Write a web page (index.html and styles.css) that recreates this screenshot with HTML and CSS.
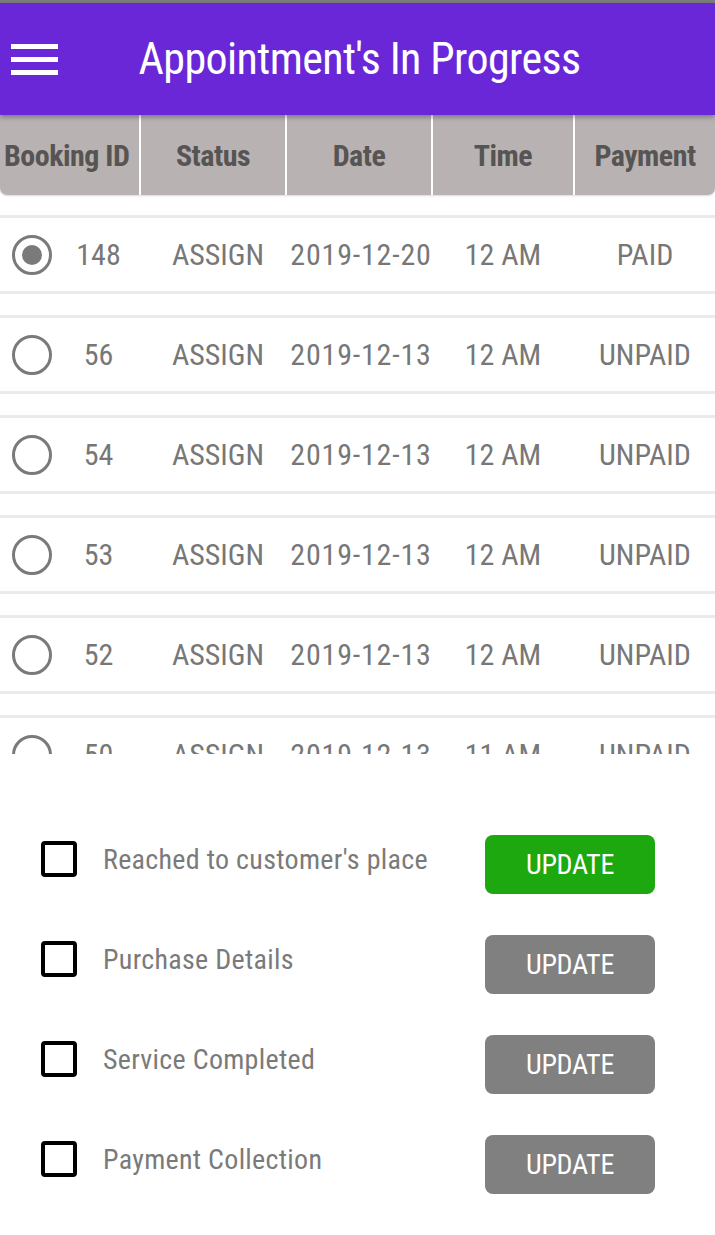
FILE: index.html
```html
<!DOCTYPE html>
<html>
<head>
<meta charset="utf-8">
<title>Appointment's In Progress</title>
<link rel="stylesheet" href="styles.css">
</head>
<body>
<div class="statusline"></div>
<header class="appbar">
  <button class="menu" aria-label="Menu">
    <span></span><span></span><span></span>
  </button>
  <h1 class="title">Appointment's In Progress</h1>
</header>

<div class="thead">
  <div class="th">Booking ID</div>
  <div class="th">Status</div>
  <div class="th">Date</div>
  <div class="th">Time</div>
  <div class="th">Payment</div>
</div>

<div class="list">
  <div class="row">
    <div class="cell first"><span class="radio checked"></span><span class="id">148</span></div>
    <div class="cell status">ASSIGN</div>
    <div class="cell date">2019-12-20</div>
    <div class="cell">12 AM</div>
    <div class="cell">PAID</div>
  </div>
  <div class="row">
    <div class="cell first"><span class="radio"></span><span class="id">56</span></div>
    <div class="cell status">ASSIGN</div>
    <div class="cell date">2019-12-13</div>
    <div class="cell">12 AM</div>
    <div class="cell">UNPAID</div>
  </div>
  <div class="row">
    <div class="cell first"><span class="radio"></span><span class="id">54</span></div>
    <div class="cell status">ASSIGN</div>
    <div class="cell date">2019-12-13</div>
    <div class="cell">12 AM</div>
    <div class="cell">UNPAID</div>
  </div>
  <div class="row">
    <div class="cell first"><span class="radio"></span><span class="id">53</span></div>
    <div class="cell status">ASSIGN</div>
    <div class="cell date">2019-12-13</div>
    <div class="cell">12 AM</div>
    <div class="cell">UNPAID</div>
  </div>
  <div class="row">
    <div class="cell first"><span class="radio"></span><span class="id">52</span></div>
    <div class="cell status">ASSIGN</div>
    <div class="cell date">2019-12-13</div>
    <div class="cell">12 AM</div>
    <div class="cell">UNPAID</div>
  </div>
  <div class="row">
    <div class="cell first"><span class="radio"></span><span class="id">50</span></div>
    <div class="cell status">ASSIGN</div>
    <div class="cell date">2019-12-13</div>
    <div class="cell">11 AM</div>
    <div class="cell">UNPAID</div>
  </div>
</div>

<section class="actions">
  <div class="action">
    <span class="check"></span>
    <span class="label">Reached to customer's place</span>
    <button class="update active">UPDATE</button>
  </div>
  <div class="action">
    <span class="check"></span>
    <span class="label">Purchase Details</span>
    <button class="update">UPDATE</button>
  </div>
  <div class="action">
    <span class="check"></span>
    <span class="label">Service Completed</span>
    <button class="update">UPDATE</button>
  </div>
  <div class="action">
    <span class="check"></span>
    <span class="label">Payment Collection</span>
    <button class="update">UPDATE</button>
  </div>
</section>
</body>
</html>
```
FILE: styles.css
```css
* { box-sizing: border-box; }
html, body { margin: 0; padding: 0; background: #ffffff; }
body {
  width: 715px;
  height: 1235px;
  overflow: hidden;
  font-family: "Roboto Condensed", Roboto, "Liberation Sans", sans-serif;
  font-stretch: condensed;
}

.statusline { height: 3px; background: #7e7e7e; }

.appbar {
  height: 112px;
  background: #6a27d8;
  display: flex;
  align-items: center;
  position: relative;
  z-index: 2;
  box-shadow: 0 2px 5px rgba(0,0,0,0.35);
}
.menu {
  margin: 0 0 0 11px;
  padding: 0;
  border: 0;
  background: transparent;
  width: 47px;
  display: flex;
  flex-direction: column;
  gap: 8px;
}
.menu span { display: block; height: 5px; background: #ffffff; }
.title {
  flex: 1;
  margin: 0 54px 0 0;
  text-align: center;
  color: #ffffff;
  font-weight: 400;
  font-size: 44px;
  letter-spacing: -0.6px;
  line-height: 1;
}

.thead {
  display: grid;
  grid-template-columns: 139px 144px 144px 140px 140px;
  column-gap: 2px;
  height: 80px;
  background: #ffffff;
  border-radius: 0 0 7px 7px;
  overflow: hidden;
  box-shadow: 0 1px 2px rgba(0,0,0,0.15);
}
.th {
  background: #b8b3b2;
  color: #575454;
  font-weight: 700;
  font-size: 30px;
  letter-spacing: -0.5px;
  display: flex;
  align-items: center;
  justify-content: center;
  white-space: nowrap;
}
.th:first-child { justify-content: flex-start; padding-left: 4px; }

.list {
  height: 559px;
  overflow: hidden;
  padding-top: 20px;
  display: flex;
  flex-direction: column;
  gap: 21px;
}
.row {
  flex: none;
  display: grid;
  grid-template-columns: 139px 144px 144px 140px 140px;
  column-gap: 2px;
  height: 79px;
  border-top: 3px solid #ebebeb;
  border-bottom: 3px solid #ebebeb;
}
.cell {
  display: flex;
  align-items: center;
  justify-content: center;
  color: #777777;
  font-size: 30px;
  white-space: nowrap;
}
.cell.status { padding-left: 10px; }
.cell.date { letter-spacing: 0.8px; padding-left: 4px; }
.cell.first { justify-content: flex-start; padding-left: 12px; }
.radio {
  flex: none;
  width: 40px;
  height: 40px;
  border: 3px solid #7a7a7a;
  border-radius: 50%;
  display: flex;
  align-items: center;
  justify-content: center;
}
.radio.checked::after {
  content: "";
  width: 20px;
  height: 20px;
  border-radius: 50%;
  background: #7a7a7a;
}
.id { flex: 1; text-align: center; margin-left: 6px; }

.actions {
  padding-top: 81px;
  display: flex;
  flex-direction: column;
  gap: 41px;
}
.action {
  display: flex;
  align-items: center;
  height: 59px;
  padding-left: 41px;
}
.check {
  flex: none;
  width: 36px;
  height: 36px;
  border: 4px solid #000000;
  border-radius: 4px;
  margin-bottom: 11px;
}
.label {
  flex: 1;
  margin-left: 26px;
  margin-bottom: 10px;
  color: #7a7a7a;
  font-size: 28px;
  letter-spacing: 0.3px;
  white-space: nowrap;
}
.update {
  flex: none;
  width: 170px;
  height: 59px;
  margin-right: 60px;
  border: 0;
  border-radius: 8px;
  background: #808080;
  color: #ffffff;
  font-family: inherit;
  font-stretch: condensed;
  font-size: 28px;
  letter-spacing: -0.3px;
  padding: 0;
}
.update.active { background: #1ea80f; }
```
